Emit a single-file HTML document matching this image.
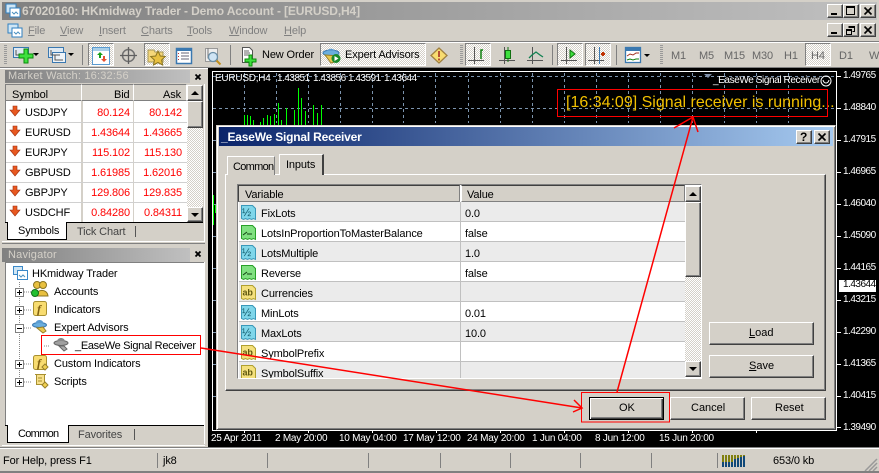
<!DOCTYPE html>
<html><head><meta charset="utf-8"><style>
html,body{margin:0;padding:0}
#r{position:relative;width:879px;height:473px;overflow:hidden;background:#d4d0c8;font:11px "Liberation Sans",sans-serif;letter-spacing:-.13px;color:#000}
#r div,#r span.t,#r svg{position:absolute}
.t{position:absolute;white-space:pre;line-height:14px}
.b{background:#d4d0c8;border:1px solid;border-color:#fff #404040 #404040 #fff;box-sizing:border-box;box-shadow:inset -1px -1px 0 #808080}
.p{box-sizing:border-box;border:1px solid;border-color:#808080 #fff #fff #808080;background-color:#e6e3dd;background-image:repeating-conic-gradient(#fff 0 25%,#d4d0c8 0 50%);background-size:2px 2px}
.red{color:#f00;text-align:right}
.w{color:#fff;font-size:10px;letter-spacing:-.25px}
.n{letter-spacing:-.5px}
.hd{background:#d4d0c8;box-sizing:border-box;border-top:1px solid #808080;border-bottom:1px solid #808080;border-right:1px solid #fff}
u{text-decoration:underline}
</style></head><body><div id="r">

<!-- title -->
<div style="left:2px;top:2px;width:875px;height:18px;background:linear-gradient(90deg,#808080,#c0c0c0)"></div>
<svg style="left:5px;top:3px" width="16" height="16"><rect x="1" y="1" width="10" height="9" fill="#cfe6f5" stroke="#2f7fc0"/><rect x="5" y="5" width="10" height="9" fill="#fff" stroke="#2f7fc0"/><path d="M7 9l2 2 2-2 2 2" stroke="#4a90c0" fill="none"/></svg>
<span class="t" style="left:22px;top:4px;font:bold 12px 'Liberation Sans',sans-serif;letter-spacing:-.13px;color:#d4d0c8">67020160: HKmidway Trader - Demo Account - [EURUSD,H4]</span>
<div class="b" style="left:827px;top:4px;width:16px;height:14px"></div><div style="left:831px;top:13px;width:6px;height:2px;background:#000"></div>
<div class="b" style="left:843px;top:4px;width:16px;height:14px"></div><div style="left:846px;top:6px;width:9px;height:9px;border:1px solid #000;border-top-width:2px;box-sizing:border-box"></div>
<div class="b" style="left:860px;top:4px;width:16px;height:14px"></div><svg style="left:863px;top:6px" width="10" height="10"><path d="M1.5 1.5l7 7M8.5 1.5l-7 7" stroke="#000" stroke-width="1.6"/></svg>

<!-- menu -->
<svg style="left:7px;top:23px" width="16" height="16"><rect x="1" y="1" width="10" height="9" fill="#cfe6f5" stroke="#2f7fc0"/><rect x="5" y="5" width="10" height="9" fill="#fff" stroke="#2f7fc0"/><path d="M7 9l2 2 2-2 2 2" stroke="#4a90c0" fill="none"/></svg>
<div style="color:#808080">
<span class="t" style="left:28px;top:24px"><u>F</u>ile</span>
<span class="t" style="left:60px;top:24px"><u>V</u>iew</span>
<span class="t" style="left:99px;top:24px"><u>I</u>nsert</span>
<span class="t" style="left:141px;top:24px"><u>C</u>harts</span>
<span class="t" style="left:187px;top:24px"><u>T</u>ools</span>
<span class="t" style="left:229px;top:24px"><u>W</u>indow</span>
<span class="t" style="left:284px;top:24px"><u>H</u>elp</span>
</div>
<div class="b" style="left:827px;top:23px;width:16px;height:14px"></div><div style="left:831px;top:32px;width:6px;height:2px;background:#000"></div>
<div class="b" style="left:843px;top:23px;width:16px;height:14px"></div><svg style="left:845px;top:25px" width="12" height="11"><path d="M3.5 1.5h6v5h-2M3.5 2.5h6" fill="none" stroke="#000"/><rect x="1.5" y="4.5" width="5" height="5" fill="none" stroke="#000"/><path d="M1 5.5h6" stroke="#000"/></svg>
<div class="b" style="left:860px;top:23px;width:16px;height:14px"></div><svg style="left:863px;top:25px" width="10" height="10"><path d="M1.5 1.5l7 7M8.5 1.5l-7 7" stroke="#000" stroke-width="1.6"/></svg>

<!-- toolbar -->
<div style="left:0;top:41px;width:879px;height:1px;background:#808080"></div>
<div style="left:0;top:42px;width:879px;height:1px;background:#fff"></div>
<div style="left:4px;top:45px;width:3px;height:20px;background:repeating-linear-gradient(#999 0 1px,#d4d0c8 1px 2px)"></div>
<div style="left:460px;top:45px;width:3px;height:20px;background:repeating-linear-gradient(#999 0 1px,#d4d0c8 1px 2px)"></div>
<div style="left:660px;top:45px;width:3px;height:20px;background:repeating-linear-gradient(#999 0 1px,#d4d0c8 1px 2px)"></div>
<div style="left:82px;top:45px;width:1px;height:20px;background:#808080"></div>
<div style="left:230px;top:45px;width:1px;height:20px;background:#808080"></div>
<div style="left:552px;top:45px;width:1px;height:20px;background:#808080"></div>
<div style="left:616px;top:45px;width:1px;height:20px;background:#808080"></div>
<div class="p" style="left:88px;top:43px;width:26px;height:23px"></div>
<div class="p" style="left:144px;top:43px;width:26px;height:23px"></div>
<div class="p" style="left:320px;top:43px;width:106px;height:23px"></div>
<div class="p" style="left:465px;top:43px;width:26px;height:23px"></div>
<div class="p" style="left:557px;top:43px;width:26px;height:23px"></div>
<div class="p" style="left:585px;top:43px;width:26px;height:23px"></div>
<div class="p" style="left:805px;top:43px;width:26px;height:23px"></div>

<svg style="left:0;top:40px" width="879" height="30">
<rect x="13.500" y="7.500" width="15" height="10" fill="#dfe9f2" stroke="#3a78b0"/><path d="M16 10v5h9" stroke="#555" fill="none"/>
<path d="M24 9h4v5h5v4h-5v5h-4v-5h-5v-4h5z" fill="#3ee03e" stroke="#0a8a0a"/>
<path d="M33 13h6l-3 3z" fill="#000"/>
<rect x="48.500" y="7.500" width="15" height="10" fill="#dfe9f2" stroke="#3a78b0"/><rect x="52.500" y="12.500" width="13" height="10" fill="#eef3f8" stroke="#3a78b0"/><path d="M51 10v5h9M55 15v5h8" stroke="#555" fill="none"/>
<path d="M68 13h6l-3 3z" fill="#000"/>
<rect x="92.500" y="7.500" width="17" height="17" fill="#fff" stroke="#5b9bd0"/><path d="M93 8h16v3H93z" fill="#a9cfe8"/><path d="M97 15l3-3 3 3h-2v3h-2v-3z" fill="#18a018"/><path d="M101 19h2v-3h2v3h2l-3 3z" fill="#e85030"/>
<circle cx="128.500" cy="15.500" r="6" fill="none" stroke="#707070" stroke-width="1.500"/><path d="M128.500 7v17M120 15.500h17" stroke="#606060" stroke-width="1.300"/>
<path d="M148 10h6l1 2h8v10h-15z" fill="#f5d77a" stroke="#a89858"/><path d="M158 11l2.300 5 5 .5-3.700 3.500 1 5-4.600-2.500-4.600 2.500 1-5-3.700-3.500 5-.5z" fill="#e8c040" stroke="#8a7420"/>
<rect x="176.500" y="8.500" width="15" height="15" fill="#fff" stroke="#3a78b0" stroke-width="1.500"/><path d="M176 9h16v2h-16z" fill="#3a78b0"/><path d="M181 13h8M181 16h8M181 19h8" stroke="#667" /><path d="M178.500 13v7" stroke="#c03030" stroke-dasharray="1 2"/>
<rect x="205.500" y="8.500" width="12" height="13" fill="#eee" stroke="#999"/><path d="M208 8v10h7" stroke="#777" fill="none"/>
<circle cx="213" cy="17" r="4.500" fill="#cfe4f4" stroke="#6a8fa8" stroke-width="1.300"/><path d="M216.500 20.500l4 4" stroke="#c09020" stroke-width="2"/>
<path d="M242.500 7.500h7l3 3v12h-10z" fill="#fff" stroke="#555"/><path d="M244 11h5M244 13h6M244 15h6" stroke="#666"/>
<path d="M249 15h3v4h4v3h-4v4h-3v-4h-4v-3h4z" fill="#3ee03e" stroke="#0a8a0a"/>
<ellipse cx="331" cy="13" rx="8" ry="3" fill="#6aaede" stroke="#3a78b0"/><path d="M327 11c1-3 7-3 8 0z" fill="#5b9bd0"/><path d="M325 15l6 8 7-2 1-5z" fill="#e8c850" stroke="#99802a"/>
<circle cx="336" cy="18.500" r="4.500" fill="#1a8a2a"/><path d="M334.500 16l4 2.500-4 2.500z" fill="#fff"/>
<path d="M439 8l8 7.500-8 7.500-8-7.500z" fill="#f8dc70" stroke="#a08040" stroke-width="1.300"/><path d="M439 11v6M439 18.500v2" stroke="#a02020" stroke-width="1.500"/>
<g stroke="#555" fill="none"><path d="M474.500 7v17M468 20.500h16"/><path d="M504.500 7v17M499 20.500h16"/><path d="M532.500 7v17M527 20.500h16"/><path d="M566.500 7v17M561 20.500h16"/><path d="M594.500 7v17M588 20.500h16"/></g>
<path d="M481 19v-9h2" stroke="#108010" stroke-width="1.500" fill="none"/>
<rect x="505.500" y="10.500" width="5" height="8" fill="#3ee03e" stroke="#107010"/><path d="M508 7v3M508 19v3" stroke="#107010"/>
<path d="M529 18l3-3 4-3 4 3 3 2" stroke="#108050" stroke-width="1.300" fill="none"/>
<path d="M570 10v8l5-4z" fill="#3ee03e" stroke="#107010"/>
<path d="M599.500 7v17" stroke="#3a78b0"/><path d="M601 14h4M603 12v4" stroke="#c03000" stroke-width="2"/>
<rect x="625.500" y="7.500" width="15" height="15" fill="#fff" stroke="#3a78b0" stroke-width="1.300"/><path d="M626 8h15v3h-15z" fill="#3a78b0"/><path d="M627 16l3-2 3 1 3-2 3 0" stroke="#a03020" fill="none"/><path d="M627 20l3-1 3 1 3-1 3 0" stroke="#108010" fill="none"/>
<path d="M644 14h6l-3 3z" fill="#000"/>
</svg>
<span class="t" style="left:262px;top:48px">New Order</span>
<span class="t" style="left:345px;top:48px">Expert Advisors</span>
<div style="color:#666">
<span class="t" style="left:671px;top:49px">M1</span><span class="t" style="left:699px;top:49px">M5</span><span class="t" style="left:724px;top:49px">M15</span><span class="t" style="left:752px;top:49px">M30</span><span class="t" style="left:784px;top:49px">H1</span><span class="t" style="left:811px;top:49px">H4</span><span class="t" style="left:839px;top:49px">D1</span><span class="t" style="left:869px;top:49px">W1</span>
</div>
<div style="left:0;top:67px;width:879px;height:1px;background:#808080"></div>
<div style="left:0;top:68px;width:208px;height:1px;background:#fff"></div>

<!-- chart -->
<div style="left:208px;top:68px;width:671px;height:380px;background:#000"></div>
<div style="left:212px;top:71px;width:625px;height:360px;border:1px solid #fff;box-sizing:border-box"></div>
<svg style="left:208px;top:68px" width="671" height="380">
<g stroke="#7b93ad" stroke-dasharray="3 3">
<path d="M5 8.500h624M5 40.500h624"/>
<path d="M36.500 5v50M68.500 5v50M100.500 5v50M132.500 5v50M164.500 5v50M195.500 5v50M227.500 5v50M260.500 5v50M292.500 5v50M324.500 5v50M356.500 5v50M388.500 5v50M420.500 5v50M452.500 5v50M484.500 5v50M516.500 5v50M548.500 5v50M580.500 5v50"/>
<path d="M5 72.500h6M5 104.500h6M5 136.500h6M5 168.500h6M5 200.500h6M5 232.500h6M5 264.500h6M5 296.500h6M5 328.500h6"/>
</g>
<g stroke="#0f0"><path d="M36.500 58V47M39.500 58V47M42.500 58V48M45.500 58V52M48.500 58V57M52.500 58V54M55.500 58V50M59.500 58V47M62.500 58V48M66.500 58V46M70.500 58V35M73.500 58V52M78.500 58V40M82.500 58V57M86.500 58V42M90.500 58V20M93.500 58V30M97.500 58V43M101.500 58V57M105.500 58V37M109.500 58V45M113.500 58V37"/><path d="M5.500 127v30M7.500 137v8"/></g>
<path d="M496 6h8l-4 4z" fill="#8090a8"/>
<g stroke="#fff"><path d="M629 8.500h4M629 40.500h4M629 72.500h4M629 104.500h4M629 136.500h4M629 168.500h4M629 200.500h4M629 232.500h4M629 264.500h4M629 296.500h4M629 328.500h4M629 359.500h4"/>
<path d="M36.500 362v3M100.500 362v3M164.500 362v3M228.500 362v3M292.500 362v3M356.500 362v3M420.500 362v3M484.500 362v3M548.500 362v3"/></g>
<circle cx="618" cy="13" r="5" fill="none" stroke="#fff"/><path d="M615 12c1 4 5 4 6 0" stroke="#fff" fill="none"/>
</svg>
<div class="w" style="position:absolute;left:0;top:0">
<span class="t" style="left:215px;top:72px">EURUSD,H4</span><span class="t n" style="left:277px;top:72px">1.43851</span><span class="t n" style="left:313px;top:72px">1.43856</span><span class="t n" style="left:348px;top:72px">1.43591</span><span class="t n" style="left:384px;top:72px">1.43644</span>
<span class="t" style="left:713px;top:74px;letter-spacing:-.4px">_EaseWe Signal Receiver</span>
<span class="t n" style="left:843px;top:69px">1.49765</span><span class="t n" style="left:843px;top:101px">1.48840</span><span class="t n" style="left:843px;top:133px">1.47915</span><span class="t n" style="left:843px;top:165px">1.46965</span><span class="t n" style="left:843px;top:197px">1.46040</span><span class="t n" style="left:843px;top:229px">1.45090</span><span class="t n" style="left:843px;top:261px">1.44165</span>
<span class="t n" style="left:843px;top:293px">1.43215</span><span class="t n" style="left:843px;top:325px">1.42290</span><span class="t n" style="left:843px;top:357px">1.41365</span><span class="t n" style="left:843px;top:389px">1.40415</span><span class="t n" style="left:843px;top:421px">1.39490</span>
<span class="t" style="left:211px;top:432px">25 Apr 2011</span><span class="t" style="left:275px;top:432px">2 May 20:00</span><span class="t" style="left:339px;top:432px">10 May 04:00</span><span class="t" style="left:403px;top:432px">17 May 12:00</span><span class="t" style="left:467px;top:432px">24 May 20:00</span><span class="t" style="left:532px;top:432px">1 Jun 04:00</span><span class="t" style="left:595px;top:432px">8 Jun 12:00</span><span class="t" style="left:659px;top:432px">15 Jun 20:00</span>
</div>
<div style="left:839px;top:280px;width:37px;height:12px;background:#fff"></div>
<span class="t n" style="left:843px;top:278px;font-size:10px">1.43644</span>
<span class="t" style="left:566px;top:94px;font-size:16px;line-height:18px;letter-spacing:0;color:#f2c000">[16:34:09] Signal receiver is running...</span>

<!-- market watch -->
<div style="left:5px;top:70px;width:185px;height:13px;background:linear-gradient(90deg,#808080,#c0c0c0)"></div>
<span class="t" style="left:8px;top:69px;color:#d4d0c8;font-size:11px;letter-spacing:.2px">Market Watch: 16:32:56</span>
<svg style="left:194px;top:73px" width="9" height="9"><path d="M1.500 1.500l5 5M6.500 1.500l-5 5" stroke="#000" stroke-width="1.800"/></svg>
<div style="left:5px;top:84px;width:182px;height:139px;background:#fff;border-left:1px solid #808080;box-sizing:border-box"></div>
<div class="hd" style="left:6px;top:84px;width:76px;height:17px"></div><div class="hd" style="left:82px;top:84px;width:52px;height:17px"></div><div class="hd" style="left:134px;top:84px;width:53px;height:17px"></div>
<span class="t" style="left:12px;top:88px">Symbol</span><span class="t" style="left:114px;top:88px">Bid</span><span class="t" style="left:163px;top:88px">Ask</span>
<div style="left:81px;top:101px;width:2px;height:122px;background:#d4d0c8"></div><div style="left:133px;top:101px;width:1px;height:122px;background:#d4d0c8"></div>
<div style="left:6px;top:122px;width:181px;height:1px;background:#d0d0d0"></div><div style="left:6px;top:142px;width:181px;height:1px;background:#d0d0d0"></div><div style="left:6px;top:162px;width:181px;height:1px;background:#d0d0d0"></div><div style="left:6px;top:182px;width:181px;height:1px;background:#d0d0d0"></div><div style="left:6px;top:202px;width:181px;height:1px;background:#d0d0d0"></div>
<svg style="left:0;top:0" width="30" height="230"><defs><path id="ar" d="M-2-5h4v4h3l-5 6-5-6h3z" fill="#e85820" stroke="#a03010" stroke-width=".6"/></defs><use href="#ar" x="15" y="111"/><use href="#ar" x="15" y="131"/><use href="#ar" x="15" y="151"/><use href="#ar" x="15" y="171"/><use href="#ar" x="15" y="191"/><use href="#ar" x="15" y="211"/></svg>
<div>
<span class="t" style="left:25px;top:106px">USDJPY</span><span class="t red" style="left:81px;width:49px;top:106px">80.124</span><span class="t red" style="left:133px;width:49px;top:106px">80.142</span>
<span class="t" style="left:25px;top:126px">EURUSD</span><span class="t red" style="left:81px;width:49px;top:126px">1.43644</span><span class="t red" style="left:133px;width:49px;top:126px">1.43665</span>
<span class="t" style="left:25px;top:146px">EURJPY</span><span class="t red" style="left:81px;width:49px;top:146px">115.102</span><span class="t red" style="left:133px;width:49px;top:146px">115.130</span>
<span class="t" style="left:25px;top:166px">GBPUSD</span><span class="t red" style="left:81px;width:49px;top:166px">1.61985</span><span class="t red" style="left:133px;width:49px;top:166px">1.62016</span>
<span class="t" style="left:25px;top:186px">GBPJPY</span><span class="t red" style="left:81px;width:49px;top:186px">129.806</span><span class="t red" style="left:133px;width:49px;top:186px">129.835</span>
<span class="t" style="left:25px;top:206px">USDCHF</span><span class="t red" style="left:81px;width:49px;top:206px">0.84280</span><span class="t red" style="left:133px;width:49px;top:206px">0.84311</span>
</div>
<div style="left:187px;top:85px;width:16px;height:137px;background-image:repeating-conic-gradient(#fff 0 25%,#d4d0c8 0 50%);background-size:2px 2px"></div>
<div class="b" style="left:187px;top:85px;width:16px;height:16px"></div><svg style="left:191px;top:91px" width="9" height="5"><path d="M4 0l4 4H0z"/></svg>
<div class="b" style="left:187px;top:101px;width:16px;height:27px"></div>
<div class="b" style="left:187px;top:207px;width:16px;height:15px"></div><svg style="left:191px;top:213px" width="9" height="5"><path d="M0 0h8L4 4z"/></svg>
<div style="left:5px;top:222px;width:198px;height:1px;background:#000"></div>
<div style="left:7px;top:222px;width:60px;height:18px;background:#fff;border:solid #000;border-width:0 1px 1px 1px;box-sizing:border-box"></div>
<span class="t" style="left:18px;top:224px">Symbols</span><span class="t" style="left:77px;top:225px;color:#444">Tick Chart</span><div style="left:135px;top:226px;width:1px;height:11px;background:#555"></div>
<div style="left:204px;top:84px;width:1px;height:157px;background:#fff"></div>
<div style="left:2px;top:241px;width:203px;height:1px;background:#fff"></div>
<div style="left:2px;top:243px;width:203px;height:1px;background:#808080"></div>

<!-- navigator -->
<div style="left:2px;top:248px;width:188px;height:14px;background:linear-gradient(90deg,#808080,#c0c0c0)"></div>
<span class="t" style="left:8px;top:248px;color:#d4d0c8;font-size:11px;letter-spacing:.2px">Navigator</span>
<svg style="left:194px;top:250px" width="9" height="9"><path d="M1.500 1.500l5 5M6.500 1.500l-5 5" stroke="#000" stroke-width="1.800"/></svg>
<div style="left:5px;top:262px;width:199px;height:163px;background:#fff;border-top:1px solid #808080;border-left:1px solid #808080;box-sizing:border-box"></div>
<svg style="left:0;top:262px" width="204" height="135">
<g stroke="#888" stroke-dasharray="1 1" fill="none"><path d="M19.500 20v100M24 30h7M24 48h7M24 66h7M49 84h-6M24 102h7M24 120h7"/></g>
<g fill="#fff" stroke="#808080"><rect x="15.500" y="26.500" width="8" height="8"/><rect x="15.500" y="44.500" width="8" height="8"/><rect x="15.500" y="62.500" width="8" height="8"/><rect x="15.500" y="98.500" width="8" height="8"/><rect x="15.500" y="116.500" width="8" height="8"/></g>
<g stroke="#000"><path d="M17 30.500h5M19.500 28v5M17 48.500h5M19.500 46v5M17 66.500h5M17 102.500h5M19.500 100v5M17 120.500h5M19.500 118v5"/></g>
<rect x="13.500" y="4.500" width="9" height="8" fill="#cfe6f5" stroke="#3a88c8"/><rect x="17.500" y="8.500" width="10" height="9" fill="#fff" stroke="#3a88c8"/><path d="M19 13l2 2 2-2 2 2" stroke="#4a90c0" fill="none"/>
<circle cx="37" cy="23" r="3.500" fill="#e8c040" stroke="#8a7420"/><circle cx="43" cy="23" r="3.500" fill="#e8c040" stroke="#8a7420"/><path d="M36 34c0-7 11-8 12 0z" fill="#e8c040" stroke="#8a7420"/><circle cx="35" cy="31" r="3.500" fill="#22c030" stroke="#107018"/>
<rect x="33.500" y="39.500" width="13" height="14" rx="2" fill="#f8dc70" stroke="#a89030"/><text x="37" y="51" font-family="Liberation Serif" font-style="italic" font-weight="bold" font-size="12" fill="#806010">f</text>
<ellipse cx="39.500" cy="63" rx="7" ry="2.500" fill="#6aaede" stroke="#3a78b0"/><path d="M35.500 61c1-4 7-4 8 0z" fill="#5b9bd0"/><path d="M37 66l6 5 3-2-3-4z" fill="#e8c850" stroke="#99802a"/>
<ellipse cx="61" cy="81" rx="7" ry="2.500" fill="#a0a0a0" stroke="#666"/><path d="M57 79c1-4 7-4 8 0z" fill="#888"/><path d="M59 84l5 5 3-2-3-3z" fill="#aaa" stroke="#666"/>
<rect x="33.500" y="93.500" width="13" height="14" rx="2" fill="#f8dc70" stroke="#a89030"/><text x="37" y="105" font-family="Liberation Serif" font-style="italic" font-weight="bold" font-size="12" fill="#806010">f</text><path d="M45 102l3 3-3 3-3-3z" fill="#f0d050" stroke="#99802a"/>
<path d="M36.500 112.500h8v10h-8z" fill="#f8e08a" stroke="#a89030"/><path d="M35 112.500h11M38 116h4M38 119h4" stroke="#a89030"/><path d="M45 120l3 3-3 3-3-3z" fill="#f0d050" stroke="#99802a"/>
</svg>
<span class="t" style="left:32px;top:267px">HKmidway Trader</span>
<span class="t" style="left:54px;top:285px">Accounts</span>
<span class="t" style="left:54px;top:303px">Indicators</span>
<span class="t" style="left:54px;top:321px">Expert Advisors</span>
<span class="t" style="left:75px;top:339px;letter-spacing:-.3px">_EaseWe Signal Receiver</span>
<span class="t" style="left:54px;top:357px">Custom Indicators</span>
<span class="t" style="left:54px;top:375px">Scripts</span>
<div style="left:5px;top:425px;width:199px;height:1px;background:#000"></div>
<div style="left:7px;top:425px;width:62px;height:18px;background:#fff;border:solid #000;border-width:0 1px 1px 1px;box-sizing:border-box"></div>
<span class="t" style="left:18px;top:427px;letter-spacing:-.7px">Common</span><span class="t" style="left:78px;top:428px;color:#444">Favorites</span><div style="left:134px;top:429px;width:1px;height:11px;background:#555"></div>
<div style="left:204px;top:262px;width:1px;height:182px;background:#fff"></div>
<div style="left:2px;top:445px;width:203px;height:1px;background:#fff"></div>

<!-- status -->
<div style="left:0;top:447px;width:879px;height:1px;background:#808080"></div>
<div style="left:0;top:448px;width:879px;height:1px;background:#fff"></div>
<span class="t" style="left:3px;top:454px">For Help, press F1</span><span class="t" style="left:163px;top:454px">jk8</span><span class="t" style="left:773px;top:454px">653/0 kb</span>
<div style="left:157px;top:453px;width:1px;height:15px;background:#808080"></div>
<div style="left:267px;top:453px;width:1px;height:15px;background:#808080"></div>
<div style="left:368px;top:453px;width:1px;height:15px;background:#808080"></div>
<div style="left:440px;top:453px;width:1px;height:15px;background:#808080"></div>
<div style="left:510px;top:453px;width:1px;height:15px;background:#808080"></div>
<div style="left:580px;top:453px;width:1px;height:15px;background:#808080"></div>
<div style="left:651px;top:453px;width:1px;height:15px;background:#808080"></div>
<div style="left:717px;top:453px;width:1px;height:15px;background:#808080"></div>
<svg style="left:721px;top:454px" width="26" height="14"><g stroke-width="2"><path d="M2 1v7M5 1v7M8 1v7M11 1v7M14 1v4M17 1v3M20 1v2M23 1v1" stroke="#808010" /><path d="M2 8v5M5 8v5M8 8v5M11 8v5M14 5v8M17 4v9M20 3v10M23 2v11" stroke="#104878"/></g></svg>
<svg style="left:862px;top:456px" width="16" height="15"><path d="M15 3L3 15M15 7l-8 8M15 11l-4 4" stroke="#999" stroke-width="1.500"/></svg>
<div style="left:0;top:471px;width:879px;height:2px;background:#808080"></div>

<!-- dialog -->
<div style="left:216px;top:125px;width:620px;height:305px;background:#d4d0c8;border:1px solid;border-color:#d4d0c8 #404040 #404040 #d4d0c8;box-sizing:border-box;box-shadow:inset 1px 1px 0 #fff,inset -1px -1px 0 #808080"></div>
<div style="left:219px;top:127px;width:614px;height:19px;background:linear-gradient(90deg,#0a246a,#a6caf0)"></div>
<span class="t" style="left:221px;top:130px;font-weight:bold;font-size:12px;color:#fff;letter-spacing:-.2px">_EaseWe Signal Receiver</span>
<div class="b" style="left:796px;top:130px;width:16px;height:14px"></div><span class="t" style="left:800px;top:130px;font-weight:bold;font-size:12px">?</span>
<div class="b" style="left:814px;top:130px;width:16px;height:14px"></div><svg style="left:817px;top:132px" width="10" height="10"><path d="M1.500 1.500l7 7M8.500 1.500l-7 7" stroke="#000" stroke-width="1.600"/></svg>

<div style="left:225px;top:174px;width:601px;height:217px;box-sizing:border-box;border:1px solid;border-color:#fff #404040 #404040 #fff;box-shadow:inset -1px -1px 0 #808080"></div>
<div style="left:227px;top:156px;width:48px;height:19px;background:#d4d0c8;border:1px solid #fff;border-bottom:0;border-right:1px solid #808080;box-sizing:border-box"></div>
<span class="t" style="left:233px;top:160px;letter-spacing:-.7px">Common</span>
<div style="left:279px;top:154px;width:45px;height:21px;background:#d4d0c8;border:1px solid #fff;border-bottom:0;border-right:2px solid #404040;box-sizing:border-box"></div>
<span class="t" style="left:286px;top:158px">Inputs</span>

<div style="left:237px;top:184px;width:465px;height:195px;box-sizing:border-box;border:1px solid;border-color:#808080 #fff #fff #808080;background:#fff"></div>
<div class="b" style="left:238px;top:185px;width:222px;height:17px;border-color:#404040 #808080 #808080 #404040;box-shadow:none"></div>
<div class="b" style="left:461px;top:185px;width:224px;height:17px;border-color:#404040 #808080 #808080 #fff;box-shadow:none"></div>

<div style="left:239px;top:202px;width:446px;height:176px;overflow:hidden">
<div style="left:0;top:0;width:446px;height:20px;background:#ebebeb;border-bottom:1px solid #c0c0c0;box-sizing:border-box"></div>
<div style="left:0;top:20px;width:446px;height:20px;background:#fff;border-bottom:1px solid #c0c0c0;box-sizing:border-box"></div>
<div style="left:0;top:40px;width:446px;height:20px;background:#ebebeb;border-bottom:1px solid #c0c0c0;box-sizing:border-box"></div>
<div style="left:0;top:60px;width:446px;height:20px;background:#fff;border-bottom:1px solid #c0c0c0;box-sizing:border-box"></div>
<div style="left:0;top:80px;width:446px;height:20px;background:#ebebeb;border-bottom:1px solid #c0c0c0;box-sizing:border-box"></div>
<div style="left:0;top:100px;width:446px;height:20px;background:#fff;border-bottom:1px solid #c0c0c0;box-sizing:border-box"></div>
<div style="left:0;top:120px;width:446px;height:20px;background:#ebebeb;border-bottom:1px solid #c0c0c0;box-sizing:border-box"></div>
<div style="left:0;top:140px;width:446px;height:20px;background:#fff;border-bottom:1px solid #c0c0c0;box-sizing:border-box"></div>
<div style="left:0;top:160px;width:446px;height:20px;background:#ebebeb"></div>
<div style="left:221px;top:0;width:1px;height:176px;background:#c0c0c0"></div>
<svg style="left:0;top:0" width="24" height="176"><defs>
<g id="v"><path d="M2.500 1.500h11l3 3v11l-2-1-2 1-2-1-2 1-2-1-2 1-2-1z" fill="#7fd6ea" stroke="#3a98b8"/><text x="3" y="12" font-family="Liberation Sans" font-size="11" fill="#105868">½</text></g>
<g id="b"><path d="M2.500 1.500h11l3 3v11l-2-1-2 1-2-1-2 1-2-1-2 1-2-1z" fill="#80e080" stroke="#28a028"/><path d="M4 11l4-3M8 10h5" stroke="#104010" fill="none"/></g>
<g id="s"><path d="M2.500 1.500h11l3 3v11l-2-1-2 1-2-1-2 1-2-1-2 1-2-1z" fill="#f4e07c" stroke="#b0a030"/><text x="3.500" y="11.500" font-family="Liberation Sans" font-size="9" font-weight="bold" fill="#605810">ab</text></g>
</defs>
<use href="#v" y="2"/><use href="#b" y="22"/><use href="#v" y="42"/><use href="#b" y="62"/><use href="#s" y="82"/><use href="#v" y="102"/><use href="#v" y="122"/><use href="#s" y="142"/><use href="#s" y="162"/></svg>
</div>
<span class="t" style="left:245px;top:188px">Variable</span><span class="t" style="left:467px;top:188px">Value</span>
<span class="t" style="left:261px;top:207px">FixLots</span><span class="t" style="left:465px;top:207px">0.0</span>
<span class="t" style="left:261px;top:227px">LotsInProportionToMasterBalance</span><span class="t" style="left:465px;top:227px">false</span>
<span class="t" style="left:261px;top:247px">LotsMultiple</span><span class="t" style="left:465px;top:247px">1.0</span>
<span class="t" style="left:261px;top:267px">Reverse</span><span class="t" style="left:465px;top:267px">false</span>
<span class="t" style="left:261px;top:287px">Currencies</span>
<span class="t" style="left:261px;top:307px">MinLots</span><span class="t" style="left:465px;top:307px">0.01</span>
<span class="t" style="left:261px;top:327px">MaxLots</span><span class="t" style="left:465px;top:327px">10.0</span>
<span class="t" style="left:261px;top:347px">SymbolPrefix</span>
<div style="left:239px;top:363px;width:445px;height:15px;overflow:hidden"><span class="t" style="left:22px;top:4px">SymbolSuffix</span></div>
<div style="left:238px;top:378px;width:463px;height:1px;background:#fff"></div>

<div style="left:685px;top:186px;width:16px;height:191px;background-image:repeating-conic-gradient(#fff 0 25%,#d4d0c8 0 50%);background-size:2px 2px"></div>
<div class="b" style="left:685px;top:186px;width:16px;height:16px"></div><svg style="left:689px;top:192px" width="9" height="5"><path d="M4 0l4 4H0z"/></svg>
<div class="b" style="left:685px;top:202px;width:16px;height:75px"></div>
<div class="b" style="left:685px;top:361px;width:16px;height:16px"></div><svg style="left:689px;top:367px" width="9" height="5"><path d="M0 0h8L4 4z"/></svg>

<div class="b" style="left:709px;top:322px;width:105px;height:23px"></div><span class="t" style="left:749px;top:326px;letter-spacing:0"><u>L</u>oad</span>
<div class="b" style="left:709px;top:355px;width:105px;height:23px"></div><span class="t" style="left:749px;top:359px;letter-spacing:0"><u>S</u>ave</span>
<div class="b" style="left:589px;top:397px;width:75px;height:23px;border:1px solid #000;box-shadow:inset 1px 1px 0 #fff,inset -1px -1px 0 #404040,inset -2px -2px 0 #808080"></div><span class="t" style="left:619px;top:401px;letter-spacing:0">OK</span>
<div class="b" style="left:670px;top:397px;width:75px;height:23px"></div><span class="t" style="left:691px;top:401px;letter-spacing:0">Cancel</span>
<div class="b" style="left:751px;top:397px;width:75px;height:23px"></div><span class="t" style="left:775px;top:401px;letter-spacing:0">Reset</span>

<!-- annotations -->
<svg style="left:0;top:0" width="879" height="473" fill="none" stroke="#f00">
<rect x="557.500" y="89.500" width="270" height="27"/>
<rect x="41.500" y="335.500" width="159" height="19"/>
<rect x="581.500" y="392.500" width="88" height="29.500"/>
<path d="M201 348L582 408" stroke-width="1.500"/><path d="M574 400L582 408L573 412" stroke-width="1.500"/>
<path d="M617 392L693 117" stroke-width="1.500"/><path d="M674 128L693 117L698 132" stroke-width="1.500"/>
</svg>
</div></body></html>
